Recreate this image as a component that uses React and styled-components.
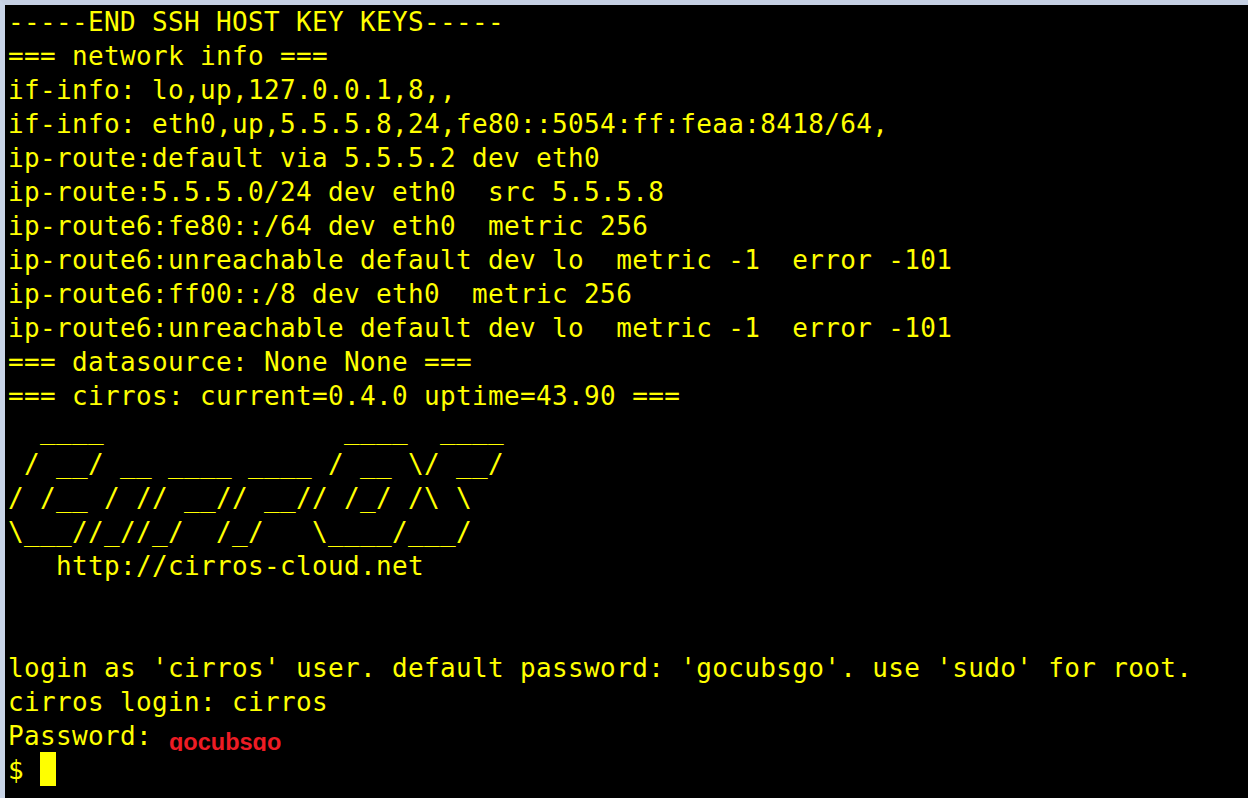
import React from 'react';
import styled, { createGlobalStyle } from 'styled-components';

const Global = createGlobalStyle`
  html, body { margin: 0; padding: 0; background: #000; overflow: hidden; }
`;

const Frame = styled.div`
  position: relative;
  width: 1248px;
  height: 798px;
  box-sizing: border-box;
  background: #000;
  border-top: 5px solid #c5d0e3;
  border-left: 5px solid #c9d5e8;
  padding-left: 3px;
  overflow: hidden;
`;

const Line = styled.div`
  height: 34px;
  line-height: 35px;
  white-space: pre;
  color: #ffff00;
  font-family: "DejaVu Sans Mono", monospace;
  font-size: 26px;
  letter-spacing: 0.35px;
`;

const PromptLine = styled.div`
  display: flex;
  align-items: flex-start;
  height: 34px;
  margin-top: -1px;
  line-height: 37px;
  white-space: pre;
  color: #ffff00;
  font-family: "DejaVu Sans Mono", monospace;
  font-size: 26px;
  letter-spacing: 0.35px;
`;

const Cursor = styled.span`
  display: block;
  width: 16px;
  height: 34px;
  background: #ffff00;
`;

const Note = styled.div`
  position: absolute;
  left: 164px;
  top: 722px;
  height: 24px;
  overflow: hidden;
  color: #ed1c24;
  font-family: "Liberation Sans", sans-serif;
  font-weight: 700;
  font-size: 23.5px;
  line-height: 30px;
`;

const lines = [
  '-----END SSH HOST KEY KEYS-----',
  '=== network info ===',
  'if-info: lo,up,127.0.0.1,8,,',
  'if-info: eth0,up,5.5.5.8,24,fe80::5054:ff:feaa:8418/64,',
  'ip-route:default via 5.5.5.2 dev eth0',
  'ip-route:5.5.5.0/24 dev eth0  src 5.5.5.8',
  'ip-route6:fe80::/64 dev eth0  metric 256',
  'ip-route6:unreachable default dev lo  metric -1  error -101',
  'ip-route6:ff00::/8 dev eth0  metric 256',
  'ip-route6:unreachable default dev lo  metric -1  error -101',
  '=== datasource: None None ===',
  '=== cirros: current=0.4.0 uptime=43.90 ===',
  '  ____               ____  ____',
  ' / __/ __ ____ ____ / __ \\/ __/',
  '/ /__ / // __// __// /_/ /\\ \\',
  '\\___//_//_/  /_/   \\____/___/',
  '   http://cirros-cloud.net',
  ' ',
  ' ',
  "login as 'cirros' user. default password: 'gocubsgo'. use 'sudo' for root.",
  'cirros login: cirros',
  'Password: ',
];

export default function App() {
  return (
    <Frame>
      <Global />
      {lines.map((text, i) => (
        <Line key={i}>{text}</Line>
      ))}
      <PromptLine>
        <span>$ </span>
        <Cursor />
      </PromptLine>
      <Note>gocubsgo</Note>
    </Frame>
  );
}
